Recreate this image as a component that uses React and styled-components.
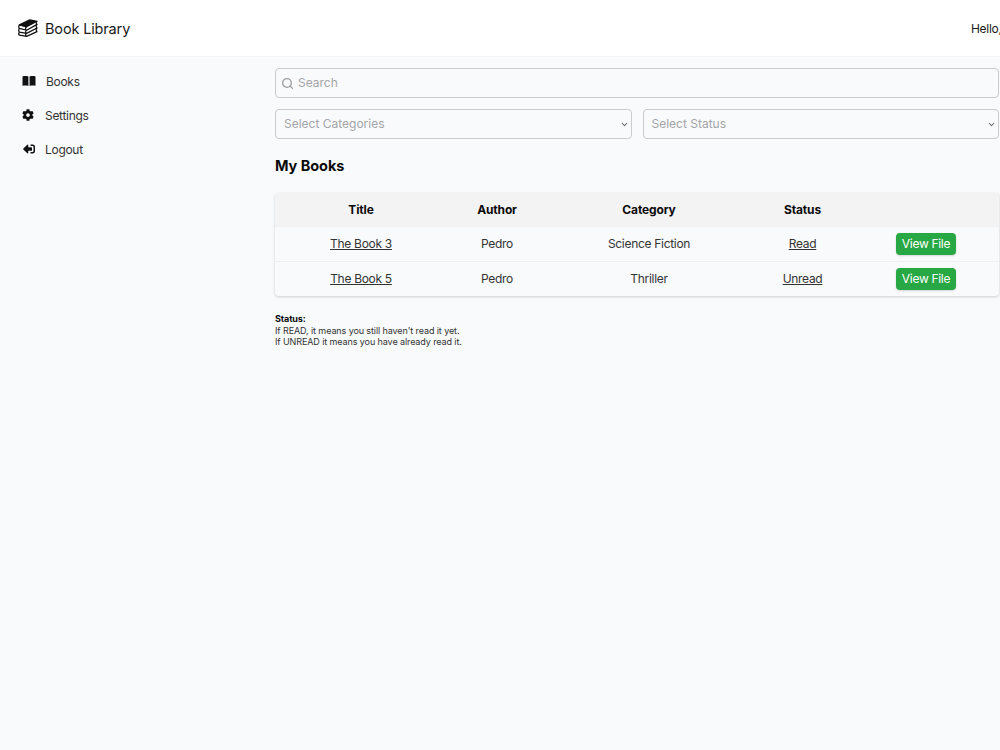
import React from "react";
import styled, { createGlobalStyle } from "styled-components";
import { FaCog, FaSignOutAlt } from "react-icons/fa";
import { LuChevronDown, LuSearch } from "react-icons/lu";

const Global = createGlobalStyle`
  html, body { margin: 0; padding: 0; height: 100%; overflow: hidden; }
  body { background: #f9fafc; font-family: "Inter", "Liberation Sans", sans-serif; color: #212529; letter-spacing: -0.3px; }
`;
const Page = styled.div`width: 1000px; height: 750px; overflow: hidden; display: flex; flex-direction: column;`;
const Header = styled.header`
  height: 57px; flex: none; background: #fff; display: flex; align-items: center;
  justify-content: space-between; padding-left: 18px; border-bottom: 1px solid #f3f4f6; box-sizing: border-box;
`;
const Brand = styled.div`display: flex; align-items: center; gap: 7px; font-size: 14.5px; letter-spacing: -0.15px; color: #1a1a1a;`;
const Hello = styled.span`font-size: 12px; width: 29px; overflow: hidden; white-space: nowrap; color: #1a1a1a;`;
const Body = styled.div`flex: 1; display: flex;`;
const Side = styled.nav`width: 275px; flex: none; padding-top: 7px; box-sizing: border-box;`;
const NavItem = styled.a`
  height: 34px; display: flex; align-items: center; padding-left: 22px; font-size: 12px; color: #333;
  svg { color: #111; flex: none; width: ${p => p.$w}px; height: ${p => p.$w}px; margin-left: ${p => p.$left || 0}px; margin-right: ${p => p.$gap}px; }
`;
const Main = styled.main`width: 724px; flex: none; padding-top: 11px; min-width: 0;`;
const Search = styled.div`
  height: 30px; box-sizing: border-box; border: 1px solid #c9cbcf; border-radius: 4px; display: flex; align-items: center;
  padding: 0 0 2px 5px; gap: 4px; font-size: 12px; letter-spacing: 0; color: #a3a5a9;
  svg { width: 13px; height: 13px; color: #9a9c9f; stroke-width: 2.4; margin-top: 2px; }
`;
const Selects = styled.div`display: grid; grid-template-columns: 1fr 1fr; gap: 11px; margin-top: 11px;`;
const Select = styled.div`
  height: 30px; box-sizing: border-box; border: 1px solid #c9cbcf; border-radius: 4px; display: flex; align-items: center;
  justify-content: space-between; padding: 0 2px 1px 8px; font-size: 12px; letter-spacing: 0; color: #a3a5a9;
  svg { width: 9px; height: 9px; color: #777; stroke-width: 3; margin-top: 1px; }
`;
const Heading = styled.h2`margin: 17px 0 0; font-size: 14.5px; line-height: 20px; font-weight: 700; letter-spacing: -0.05px; color: #0a0a0a;`;
const Table = styled.div`
  margin-top: 17px; border-radius: 4px; box-shadow: 0 1px 3px rgba(0,0,0,.18); width: 724px;
`;
const Row = styled.div`
  display: grid; grid-template-columns: 172px 100px 204px 103px 144px; align-items: center; text-align: center;
  height: ${p => p.$h}px; padding-bottom: ${p => p.$pad}px; box-sizing: border-box; font-size: 12px; color: #333;
  background: ${p => p.$head ? "#f3f3f3" : "transparent"};
  font-weight: ${p => p.$head ? 700 : 400};
  ${p => p.$head ? "color:#0a0a0a; letter-spacing:-0.15px; border-radius:4px 4px 0 0;" : ""}
  ${p => p.$line ? "border-bottom:1px solid #eff0f2;" : ""}
`;
const Link = styled.a`text-decoration: underline; color: #333;`;
const Button = styled.button`
  justify-self: center; width: 60px; height: 22px; padding: 0; border: 0; border-radius: 4px; background: #28a745; color: #fff;
  font: inherit; font-size: 12px; letter-spacing: -0.3px; box-shadow: 0 1px 2px rgba(0,0,0,.15);
`;
const Note = styled.div`margin-top: 17px; font-size: 9px; line-height: 11.5px; letter-spacing: -0.1px; color: #333; b { color: #0a0a0a; display: block; }`;

const Logo = () => (
  <svg width="20" height="18" viewBox="0 0 22 20" fill="none" stroke="#111" strokeWidth="1.4" strokeLinejoin="round">
    <path d="M1.5 6.5 L13 1 L21 2.5 L9.5 8.5 Z" fill="#111"/>
    <path d="M21 2.5 C19.8 3.6 19.8 5 21 6 L9.5 12.5 C8 12.6 7.6 9.7 9.5 8.5 M9.5 8.5 L1.5 6.5 C.5 8 .6 9.6 1.5 10.5 L9.5 12.5"/>
    <path d="M21 6 C19.8 7.2 19.8 8.8 21 10 L9.5 16 C8 15.5 7.8 13.5 9.5 12.5 M1.5 10.5 C.5 12 .6 13.6 1.5 14.5 L9.5 16"/>
    <path d="M21 10 C19.8 11.2 19.8 12.8 21 14 L9.5 19.3 C8 18.8 7.8 17 9.5 16 M1.5 14.5 C.5 16 .6 17.4 1.5 18 L9.5 19.3"/>
  </svg>
);
const BookIcon = () => (
  <svg viewBox="0 0 14 14" fill="currentColor">
    <path d="M0.5 2.4 C2.5 2 4.8 2 6.4 2.6 V12 C4.8 11.4 2.5 11.4 0.5 11.8 Z"/>
    <path d="M13.5 2.4 C11.5 2 9.2 2 7.6 2.6 V12 C9.2 11.4 11.5 11.4 13.5 11.8 Z"/>
  </svg>
);
const Flip = styled(FaSignOutAlt)`transform: scaleX(-1);`;

export default function App() {
  return (
    <Page>
      <Global />
      <Header>
        <Brand><Logo />Book Library</Brand>
        <Hello>Hello, Pedro</Hello>
      </Header>
      <Body>
        <Side>
          <NavItem $w={14} $gap={10}><BookIcon />Books</NavItem>
          <NavItem $w={12} $left={0} $gap={11}><FaCog />Settings</NavItem>
          <NavItem $w={12} $left={1} $gap={10}><Flip />Logout</NavItem>
        </Side>
        <Main>
          <Search><LuSearch />Search</Search>
          <Selects>
            <Select>Select Categories<LuChevronDown /></Select>
            <Select>Select Status<LuChevronDown /></Select>
          </Selects>
          <Heading>My Books</Heading>
          <Table>
            <Row $head $h={34} $pad={1}><span>Title</span><span>Author</span><span>Category</span><span>Status</span><span /></Row>
            <Row $h={35} $pad={1} $line><Link>The Book 3</Link><span>Pedro</span><span>Science Fiction</span><Link>Read</Link><Button>View File</Button></Row>
            <Row $h={34} $pad={1}><Link>The Book 5</Link><span>Pedro</span><span>Thriller</span><Link>Unread</Link><Button>View File</Button></Row>
          </Table>
          <Note>
            <b>Status:</b>
            If READ, it means you still haven't read it yet.<br />
            If UNREAD it means you have already read it.
          </Note>
        </Main>
      </Body>
    </Page>
  );
}
